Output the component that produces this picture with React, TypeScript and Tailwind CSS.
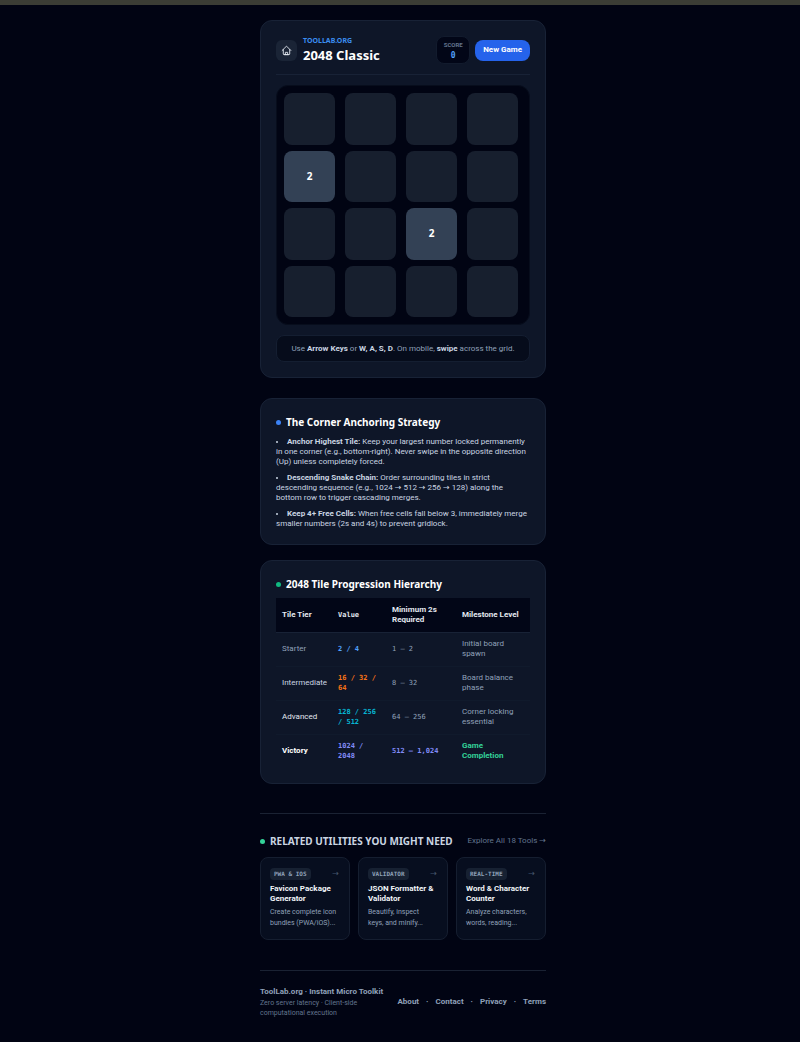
import React from "react";
import clsx from "clsx";

const BOARD = [
  [0, 0, 0, 0],
  [2, 0, 0, 0],
  [0, 0, 2, 0],
  [0, 0, 0, 0],
];

const STRATEGIES = [
  {
    title: "Anchor Highest Tile:",
    text: "Keep your largest number locked permanently in one corner (e.g., bottom-right). Never swipe in the opposite direction (Up) unless completely forced.",
  },
  {
    title: "Descending Snake Chain:",
    text: "Order surrounding tiles in strict descending sequence (e.g., 1024 → 512 → 256 → 128) along the bottom row to trigger cascading merges.",
  },
  {
    title: "Keep 4+ Free Cells:",
    text: "When free cells fall below 3, immediately merge smaller numbers (2s and 4s) to prevent gridlock.",
  },
];

const TIERS = [
  {
    tier: "Starter",
    tierClass: "text-slate-400",
    value: "2 / 4",
    valueClass: "text-blue-400",
    min: "1 – 2",
    minClass: "text-slate-400",
    milestone: "Initial board spawn",
    milestoneClass: "text-slate-400",
  },
  {
    tier: "Intermediate",
    tierClass: "text-slate-300",
    value: "16 / 32 / 64",
    valueClass: "text-[#f97316]",
    min: "8 – 32",
    minClass: "text-slate-400",
    milestone: "Board balance phase",
    milestoneClass: "text-slate-400",
  },
  {
    tier: "Advanced",
    tierClass: "text-slate-200",
    value: "128 / 256 / 512",
    valueClass: "text-[#06b6d4]",
    min: "64 – 256",
    minClass: "text-slate-400",
    milestone: "Corner locking essential",
    milestoneClass: "text-slate-400",
  },
  {
    tier: "Victory",
    tierClass: "font-bold text-white",
    value: "1024 / 2048",
    valueClass: "text-[#818cf8]",
    min: "512 – 1,024",
    minClass: "font-bold text-[#818cf8]",
    milestone: "Game Completion",
    milestoneClass: "font-bold text-[#34d399]",
  },
];

const TOOLS = [
  { tag: "PWA & IOS", name: "Favicon Package Generator", text: "Create complete icon bundles (PWA/iOS)..." },
  { tag: "VALIDATOR", name: "JSON Formatter & Validator", text: "Beautify, inspect keys, and minify..." },
  { tag: "REAL-TIME", name: "Word & Character Counter", text: "Analyze characters, words, reading..." },
];

const FOOTER_LINKS = ["About", "Contact", "Privacy", "Terms"];

const MONO = "font-['DejaVu_Sans_Mono',monospace]";
const HEADING = "font-['Noto_Sans',sans-serif]";

function HomeIcon() {
  return (
    <svg viewBox="0 0 24 24" className="h-[11px] w-[11px]" fill="none" stroke="currentColor" strokeWidth="2" strokeLinecap="round" strokeLinejoin="round" aria-hidden="true">
      <path d="M2.5 12 12 2.500l9.500 9.500" />
      <path d="M5 10v9.500a1.500 1.500 0 0 0 1.500 1.500h11a1.500 1.500 0 0 0 1.500-1.500V10" />
      <path d="M9.500 21v-5h5v5M8 21h8" />
    </svg>
  );
}

function Card({ children }: { children: React.ReactNode }) {
  return (
    <section className="rounded-xl border border-[#182236] bg-[#0e1628] p-[15px]">{children}</section>
  );
}

function CardTitle({ dot, children }: { dot: string; children: React.ReactNode }) {
  return (
    <h2 className={clsx(HEADING, "flex items-center gap-[5px] text-[10px] leading-4 font-bold text-white")}>
      <span className={clsx("h-[5px] w-[5px] rounded-full", dot)} />
      {children}
    </h2>
  );
}

function Tile({ value }: { value: number }) {
  return (
    <div
      className={clsx(
        HEADING,
        "flex w-[51px] items-center justify-center rounded-lg text-[10px] font-bold",
        value ? "bg-[#334155] text-white" : "bg-[#171f2e]"
      )}
    >
      {value || ""}
    </div>
  );
}

function Game() {
  return (
    <Card>
      <header className="flex items-center justify-between border-b border-[#182236] pb-2.5">
        <div className="flex items-center gap-1.5">
          <a href="/" aria-label="Home" className="flex h-[21px] w-[21px] items-center justify-center rounded-md bg-[#1a2436] text-slate-200">
            <HomeIcon />
          </a>
          <div className={HEADING}>
            <p className="text-[7px] leading-[10px] font-bold text-[#3b8df0]">TOOLLAB.ORG</p>
            <h1 className="text-[13px] leading-[18px] font-bold text-white">2048 Classic</h1>
          </div>
        </div>
        <div className="flex items-center gap-[5px]">
          <div className="flex h-7 w-[34px] flex-col items-center justify-center rounded-lg border border-[#121b2d] bg-[#020617] font-bold">
            <span className="text-[6px] leading-[10px] text-slate-500">SCORE</span>
            <span className={clsx(MONO, "text-[8px] leading-[11px] text-blue-400")}>0</span>
          </div>
          <button type="button" className="h-[21px] rounded-lg bg-[#2563eb] px-2 text-[8px] font-bold whitespace-nowrap text-white">
            New Game
          </button>
        </div>
      </header>

      <div className="mt-2.5 rounded-xl border border-[#070d1c] bg-[#010413] p-[7px]">
        <div className="grid h-56 grid-cols-4 grid-rows-4 gap-1.5">
          {BOARD.flat().map((value, i) => (
            <Tile key={i} value={value} />
          ))}
        </div>
      </div>

      <p className="mt-2.5 rounded-lg border border-[#141e31] bg-[#060c1b] pt-[7px] pb-1.5 text-center text-[8px] leading-3 whitespace-nowrap text-slate-400">
        Use <strong className="text-slate-300">Arrow Keys</strong> or <strong className="text-slate-300">W, A, S, D</strong>. On
        mobile, <strong className="text-slate-300">swipe</strong> across the grid.
      </p>
    </Card>
  );
}

function Strategy() {
  return (
    <Card>
      <CardTitle dot="bg-[#3b82f6]">The Corner Anchoring Strategy</CardTitle>
      <ul className="mt-[7px] list-inside list-disc space-y-1.5 text-[8px] leading-[10px] text-slate-300">
        {STRATEGIES.map((s) => (
          <li key={s.title}>
            <strong>{s.title}</strong> {s.text}
          </li>
        ))}
      </ul>
    </Card>
  );
}

function Hierarchy() {
  return (
    <Card>
      <CardTitle dot="bg-[#10b981]">2048 Tile Progression Hierarchy</CardTitle>
      <table className="mt-1.5 w-full table-fixed text-left text-[8px] leading-[10px]">
        <thead>
          <tr className="h-[34px] border-b border-[#182236] bg-[#020617] text-slate-200">
            <th className="w-14 px-1.5">Tile Tier</th>
            <th className={clsx(MONO, "w-[54px] px-1.5 text-[7px]")}>Value</th>
            <th className="w-[70px] px-1.5">
              Minimum 2s
              <br />
              Required
            </th>
            <th className="pl-1.5 whitespace-nowrap">Milestone Level</th>
          </tr>
        </thead>
        <tbody>
          {TIERS.map((row) => (
            <tr key={row.tier} className="h-[34px] border-b border-[#101a2c] last:border-0">
              <td className={clsx("pl-1.5 whitespace-nowrap", row.tierClass)}>{row.tier}</td>
              <td className={clsx(MONO, "px-1.5 text-[7px] font-bold", row.valueClass)}>{row.value}</td>
              <td className={clsx(MONO, "px-1.5 text-[7px]", row.minClass)}>{row.min}</td>
              <td className={clsx("pr-4 pl-1.5", row.milestoneClass)}>{row.milestone}</td>
            </tr>
          ))}
        </tbody>
      </table>
    </Card>
  );
}

function Related() {
  return (
    <section className="mt-[29px] border-t border-[#1a2233] pt-[19px]">
      <div className="mb-2 flex items-center justify-between whitespace-nowrap">
        <h2 className={clsx(HEADING, "flex items-center gap-[5px] text-[10px] leading-4 font-bold text-slate-300")}>
          <span className="h-[5px] w-[5px] rounded-full bg-[#34d399]" />
          RELATED UTILITIES YOU MIGHT NEED
        </h2>
        <a href="/tools" className="text-[8px] text-slate-500">
          Explore All 18 Tools →
        </a>
      </div>
      <div className="grid grid-cols-3 gap-2">
        {TOOLS.map((tool) => (
          <a key={tool.name} href="/tools" className="rounded-lg border border-[#151e30] bg-[#070e1f] py-2.5 pr-1.5 pl-[9px]">
            <div className="flex items-center justify-between pr-1">
              <span className={clsx(MONO, "rounded-sm bg-[#172132] px-1 text-[6px] leading-3 font-bold text-slate-400")}>
                {tool.tag}
              </span>
              <span className="text-[8px] leading-3 text-slate-600">→</span>
            </div>
            <h3 className="mt-1 text-[8px] leading-[10px] font-bold text-slate-100">{tool.name}</h3>
            <p className="mt-[3px] pr-1.5 text-[7px] leading-[11px] text-slate-400">{tool.text}</p>
          </a>
        ))}
      </div>
    </section>
  );
}

function Footer() {
  return (
    <footer className="mt-[30px] flex items-center justify-between border-t border-[#1a2233] pt-[15px] pb-6 whitespace-nowrap">
      <div className="w-32">
        <p className="text-[8px] leading-3 font-bold text-slate-400">ToolLab.org · Instant Micro Toolkit</p>
        <p className="text-[7px] leading-[10px] text-slate-500">
          Zero server latency · Client-side
          <br />
          computational execution
        </p>
      </div>
      <nav className="flex items-center gap-[7px] text-[8px] font-bold text-slate-400">
        {FOOTER_LINKS.map((label, i) => (
          <React.Fragment key={label}>
            {i > 0 && <span>·</span>}
            <a href={`/${label.toLowerCase()}`}>{label}</a>
          </React.Fragment>
        ))}
      </nav>
    </footer>
  );
}

export default function App() {
  return (
    <div className="min-h-screen bg-[#010413] font-[Roboto,'DejaVu_Sans',sans-serif]">
      <div className="h-[5px] bg-[#3b3d35]" />
      <div className="flex justify-center pt-[15px] pl-1.5">
        <main className="w-full max-w-[286px]">
          <Game />
          <div className="mt-5 space-y-[15px]">
            <Strategy />
            <Hierarchy />
          </div>
          <Related />
          <Footer />
        </main>
      </div>
    </div>
  );
}
